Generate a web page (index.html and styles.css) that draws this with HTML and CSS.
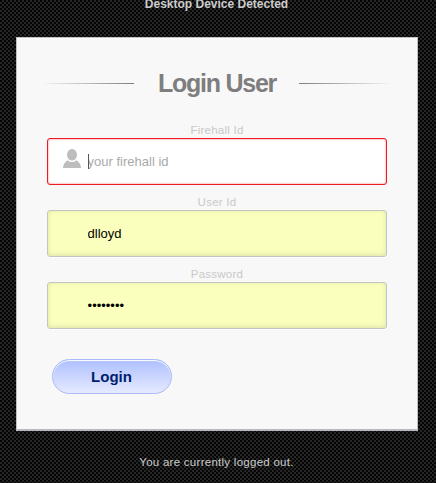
FILE: index.html
```html
<!DOCTYPE html>
<html lang="en">
<head>
<meta charset="utf-8">
<title>Login User</title>
<link rel="stylesheet" href="styles.css">
</head>
<body>
<p class="device">Desktop Device Detected</p>
<main class="card">
  <h1 class="title"><span>Login User</span></h1>
  <form class="form">
    <label class="label" for="firehall">Firehall Id</label>
    <div class="field field-active">
      <svg class="user-icon" width="18" height="19" viewBox="0 0 18 19" fill="#bdbdbd"><ellipse cx="9" cy="5.8" rx="5" ry="5.8"/><path d="M0 19C0 15.500 1.500 13.500 4.500 11.200Q9 15 13.500 11.200C16.500 13.500 18 15.500 18 19Z"/></svg>
      <span class="caret"></span>
      <input id="firehall" type="text" placeholder="your firehall id">
    </div>
    <label class="label" for="user">User Id</label>
    <div class="field field-filled"><input id="user" type="text" value="dlloyd"></div>
    <label class="label" for="password">Password</label>
    <div class="field field-filled"><input id="password" type="password" value="password"></div>
    <button class="login" type="button">Login</button>
  </form>
</main>
<p class="status">You are currently logged out.</p>
</body>
</html>
```
FILE: styles.css
```css
* { box-sizing: border-box; }
html { height: 100%; overflow: hidden; }
body {
  margin: 0;
  height: 483px;
  overflow: hidden;
  font: 12px/14px "Liberation Sans", Arial, sans-serif;
  color: #ccc;
  text-align: center;
  background-color: #050505;
  background-image: conic-gradient(#262626 25%, #050505 0 50%, #262626 0 75%, #050505 0);
  background-size: 4px 4px;
}
p { margin: 0; }
.device {
  height: 37px;
  font-weight: bold;
  line-height: 8px;
  padding-right: 3px;
}
.card {
  width: 402px;
  height: 394px;
  margin-left: 16px;
  padding: 0 30px;
  background: #f8f8f8;
  border: 1px solid #c1c2c8;
  border-bottom: 2px solid #b8b9c1;
  box-shadow: inset 0 1px #fff;
}
.title {
  display: flex;
  align-items: center;
  gap: 24px;
  height: 58px;
  margin: 17px -11px 0;
  font-size: 25px;
  line-height: 30px;
  letter-spacing: -1.25px;
  color: #7e7e7e;
}
.title span { width: 117px; margin-top: -2px; white-space: nowrap; text-align: left; }
.title::before, .title::after {
  content: "";
  flex: 0 0 98px;
  height: 1px;
  margin-top: -2px;
  background: linear-gradient(to right, #fff, #7e7e7e);
}
.title::after { background: linear-gradient(to left, #fff, #7e7e7e); }
.form { margin-top: 10px; }
.label {
  display: block;
  height: 15px;
  font-size: 11.5px;
  letter-spacing: .25px;
  line-height: 15px;
  color: #c9c9c9;
}
.field {
  position: relative;
  width: 340px;
  height: 47px;
  margin-bottom: 10px;
  border: 1px solid #c4c4c4;
  border-radius: 3px;
  background: #fff;
}
.field-active {
  border-color: #ed1c24;
  box-shadow: inset 0 0 2px rgba(237, 28, 36, .7);
}
.field-filled {
  background: #faffbd;
  box-shadow: 0 1px 0 #fff, inset 0 -1px 5px rgba(0, 0, 0, .12);
}
.field input {
  width: 100%;
  height: 45px;
  padding: 0 10px 0 39.600px;
  border: 0;
  outline: 0;
  background: transparent;
  color: #000;
  font: 13px "Liberation Sans", Arial, sans-serif;
}
.field input::placeholder { color: #a9a9a9; }
.user-icon { position: absolute; left: 15px; top: 10px; }
.caret {
  position: absolute;
  left: 40px;
  top: 15px;
  width: 1px;
  height: 15px;
  background: #555;
}
.login {
  display: block;
  width: 120px;
  height: 35px;
  margin: 30px 0 0 5px;
  padding: 0 1px 0 0;
  border: 1px solid #a9b9fb;
  border-radius: 18px;
  background: linear-gradient(#adbfff, #e6ebff);
  box-shadow: inset 0 1px 1px #fff;
  font: bold 15px "Liberation Sans", Arial, sans-serif;
  color: #00206e;
}
.status {
  margin-top: 24px;
  padding-right: 3px;
  font-size: 11.5px;
  letter-spacing: .27px;
}
```
